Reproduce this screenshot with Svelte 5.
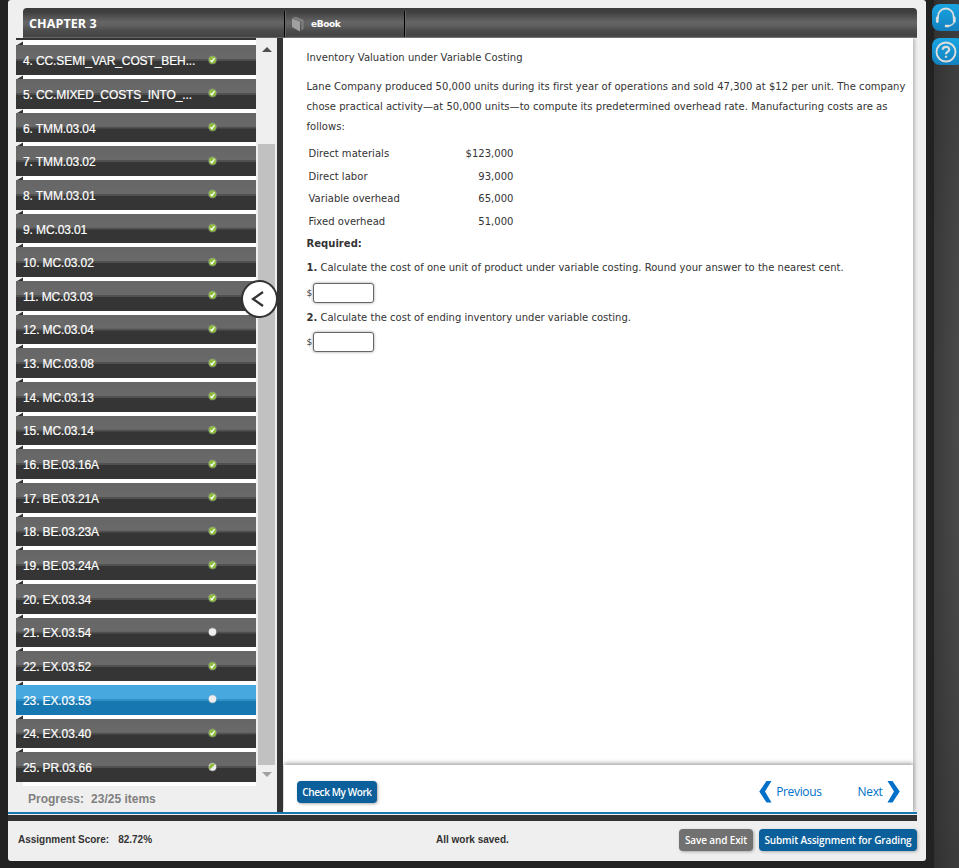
<script lang="ts">
  type Status = 'done' | 'partial' | 'empty';
  type Item = { n: number; title: string; status: Status };

  const titles = [
    'CC.SEMI_VAR_COST_BEH...',
    'CC.MIXED_COSTS_INTO_...',
    'TMM.03.04',
    'TMM.03.02',
    'TMM.03.01',
    'MC.03.01',
    'MC.03.02',
    'MC.03.03',
    'MC.03.04',
    'MC.03.08',
    'MC.03.13',
    'MC.03.14',
    'BE.03.16A',
    'BE.03.21A',
    'BE.03.23A',
    'BE.03.24A',
    'EX.03.34',
    'EX.03.54',
    'EX.03.52',
    'EX.03.53',
    'EX.03.40',
    'PR.03.66'
  ];

  const statuses: Record<number, Status> = { 21: 'empty', 23: 'empty', 25: 'partial' };

  const items: Item[] = titles.map((title, i) => ({
    n: i + 4,
    title,
    status: statuses[i + 4] ?? 'done'
  }));

  const costs = [
    ['Direct materials', '$123,000'],
    ['Direct labor', '93,000'],
    ['Variable overhead', '65,000'],
    ['Fixed overhead', '51,000']
  ];

  let selected = $state(23);
  let unitCost = $state('');
  let inventoryCost = $state('');
</script>

<div class="page">
  <div class="window">
    <header class="topbar">
      <h1>CHAPTER 3</h1>
      <button type="button" class="ebook">
        <svg width="12" height="16" viewBox="0 0 12 16" aria-hidden="true">
          <path d="M0 2.500 8 5.500V15.500L0 11Z" fill="#a0a0a0" />
          <path d="M0 2 3.500 .800 11.500 3.800V13L9.500 14.500V5.500Z" fill="#808080" />
        </svg>
        <span>eBook</span>
      </button>
    </header>

    <div class="main">
      <nav class="sidebar">
        <ul class="items">
          {#each items as item (item.n)}
            <li>
              <button
                type="button"
                class="item"
                class:active={item.n === selected}
                onclick={() => (selected = item.n)}
              >
                <span class="name">{item.n}. {item.title}</span>
                <svg class="dot" width="10" height="10" viewBox="0 0 10 10" aria-hidden="true">
                  <circle cx="5.500" cy="5" r="4.500" fill="#bbb" opacity=".35" />
                  <circle cx="5.500" cy="5" r="3.700" fill={item.status === 'done' ? '#8fbe3f' : '#ededed'} />
                  {#if item.status === 'done'}
                    <path d="M3.500 5.200 4.900 6.700 7.500 3.200" fill="none" stroke="#fff" stroke-width="1.300" />
                  {:else if item.status === 'partial'}
                    <path d="M2.900 7.600A3.700 3.700 0 0 1 8.100 2.400Z" fill="#8fbe3f" />
                  {/if}
                </svg>
              </button>
            </li>
          {/each}
        </ul>
        <p class="progress"><span>Progress:</span><span>23/25 items</span></p>
      </nav>

      <div class="scrollbar">
        <span class="arrow up"></span>
        <span class="thumb"></span>
        <span class="arrow down"></span>
      </div>

      <div class="divider">
        <button type="button" class="collapse" aria-label="Collapse">
          <svg width="13" height="16" viewBox="0 0 13 16" aria-hidden="true">
            <path d="M12 1 2 8l10 7" fill="none" stroke="#333" stroke-width="2.200" />
          </svg>
        </button>
      </div>

      <section class="content">
        <article class="question">
          <p class="title">Inventory Valuation under Variable Costing</p>
          <p class="intro">
            Lane Company produced 50,000 units during its first year of operations and sold 47,300 at $12 per unit. The company<br />
            chose practical activity—at 50,000 units—to compute its predetermined overhead rate. Manufacturing costs are as<br />
            follows:
          </p>
          <table>
            <tbody>
              {#each costs as [label, amount]}
                <tr><td>{label}</td><td class="amount">{amount}</td></tr>
              {/each}
            </tbody>
          </table>
          <p class="required"><b>Required:</b></p>
          <p class="ask"><b>1.</b> Calculate the cost of one unit of product under variable costing. Round your answer to the nearest cent.</p>
          <label class="answer"><span>$</span><input bind:value={unitCost} /></label>
          <p class="ask second"><b>2.</b> Calculate the cost of ending inventory under variable costing.</p>
          <label class="answer"><span>$</span><input bind:value={inventoryCost} /></label>
        </article>

        <div class="actions">
          <button type="button" class="btn check">Check My Work</button>
          <div class="pager">
            <a href="#prev">
              <svg width="13" height="22" viewBox="0 0 13 22" aria-hidden="true">
                <path d="M7.500 0H12.500L6 10.500 12.500 21.500H7.500L.300 10.500Z" fill="#0070c9" />
              </svg>
              <span>Previous</span>
            </a>
            <a href="#next">
              <span>Next</span>
              <svg width="13" height="22" viewBox="0 0 13 22" aria-hidden="true">
                <path d="M5.500 0H.500L7 10.500 .500 21.500H5.500L12.700 10.500Z" fill="#0070c9" />
              </svg>
            </a>
          </div>
        </div>
      </section>
    </div>

    <div class="rule"></div>

    <footer class="bottom">
      <p class="score"><span>Assignment Score:</span><span>82.72%</span></p>
      <p class="saved">All work saved.</p>
      <button type="button" class="btn exit">Save and Exit</button>
      <button type="button" class="btn submit">Submit Assignment for Grading</button>
    </footer>
  </div>

  <aside class="rail">
    <button type="button" aria-label="Support">
      <svg width="22" height="22" viewBox="0 0 22 22" fill="none" stroke="#ddd" aria-hidden="true">
        <path d="M3 11V9.500a7.800 8 0 0 1 15.600 0V11" stroke-width="1.800" />
        <path d="M2.300 11v3.500M19.300 11v3.500" stroke-width="2.800" stroke-linecap="round" />
        <path d="M19 15.500q-1.500 3-5.500 3.500" stroke-width="1.200" />
        <path d="M11 19h2.500" stroke-width="2.600" stroke-linecap="round" />
      </svg>
    </button>
    <button type="button" aria-label="Help">
      <svg width="22" height="22" viewBox="0 0 22 22" fill="none" stroke="#ddd" aria-hidden="true">
        <circle cx="11" cy="11" r="9.500" stroke-width="1.900" />
        <path d="M7.800 8.700q0-2.800 3.200-2.800t3.200 2.500q0 1.500-1.600 2.400T11 13.200" stroke-width="2.200" />
        <circle cx="11" cy="15.800" r=".8" fill="#ddd" />
      </svg>
    </button>
  </aside>
</div>

<style>
  :global(body) {
    background: #222;
  }

  .page {
    display: flex;
    height: 868px;
    overflow: hidden;
    box-sizing: border-box;
    padding-left: 8px;
    color: #333;
    font-family: 'Liberation Sans', Arial, sans-serif;
  }

  p,
  h1,
  ul {
    margin: 0;
    padding: 0;
  }

  button {
    padding: 0;
    border: 0;
    cursor: pointer;
  }

  .window {
    display: flex;
    flex-direction: column;
    width: 918px;
    height: 861px;
    flex-shrink: 0;
    background: #efefef;
    border-radius: 3px;
  }

  .topbar {
    display: flex;
    height: 30px;
    flex-shrink: 0;
    margin: 8px 9px 0 15px;
    box-sizing: border-box;
    border-bottom: 1px solid #666;
    border-radius: 4px 4px 0 0;
    background: linear-gradient(#3a3a3a, #404040 15%, #656565 48%, #606060 60%, #4c4c4c 78%, #454545 96%);
    color: #fff;
  }

  .topbar h1 {
    width: 261px;
    padding-left: 6px;
    box-sizing: border-box;
    font: bold 12.500px/31px 'Open Sans', sans-serif;
    letter-spacing: 0.1px;
  }

  .ebook {
    display: flex;
    align-items: center;
    width: 121px;
    height: 26px;
    margin-top: 3px;
    box-sizing: border-box;
    border-left: 1px solid #000;
    border-right: 1px solid #000;
    box-shadow: 1px 0 #666, inset 1px 0 #666;
    padding-left: 7px;
    gap: 7px;
    background: none;
    color: #fff;
    font: bold 9px 'DejaVu Sans', sans-serif;
    letter-spacing: -0.4px;
  }

  .main {
    display: flex;
    height: 774px;
    padding-right: 9px;
    flex-shrink: 0;
  }

  .sidebar {
    width: 240px;
    margin-left: 8px;
    flex-shrink: 0;
    border-top: 2px solid #333;
    box-sizing: border-box;
  }

  .items {
    height: 746px;
    list-style: none;
    background: linear-gradient(90deg, #efefef 7px, #fff 7px);
    padding-top: 1.400px;
    box-sizing: border-box;
  }

  .items li {
    height: 33.67px;
    padding-top: 4px;
    box-sizing: border-box;
    background: linear-gradient(150deg, transparent 3.500px, #333 4.500px) 0 0 / 7px 4px no-repeat;
  }

  .item {
    display: flex;
    align-items: center;
    width: 100%;
    height: 29.67px;
    padding: 0 39px 0 7px;
    background: linear-gradient(#666 0, #696969 46%, #505050 48%, #505050 52%, #353535 55%);
    color: #fff;
    font: 12px/30px 'Liberation Sans', Arial, sans-serif;
    letter-spacing: -0.11px;
    -webkit-text-stroke: 0.2px #fff;
  }

  .item.active {
    background: linear-gradient(#47a8e0 0, #47a8e0 46%, #3190c8 48%, #3190c8 52%, #1777b0 55%);
  }

  .name {
    flex: 1;
    text-align: left;
    white-space: nowrap;
    padding-top: 2px;
  }

  .dot {
    margin-bottom: 1px;
  }

  .progress {
    display: flex;
    gap: 7px;
    padding-left: 12px;
    color: #808080;
    font: bold 12px/27px 'Liberation Sans', Arial, sans-serif;
  }

  .scrollbar {
    display: flex;
    flex-direction: column;
    align-items: center;
    width: 21px;
    height: 748px;
    flex-shrink: 0;
  }

  .arrow {
    border: solid transparent;
    border-width: 0 5px;
  }

  .up {
    margin: 9px 0 92px;
    border-bottom: 5px solid #505050;
  }

  .thumb {
    width: 17px;
    height: 621px;
    background: #c1c1c1;
  }

  .down {
    margin-top: 7px;
    border-top: 5px solid #a0a0a0;
  }

  .divider {
    position: relative;
    width: 6px;
    flex-shrink: 0;
    background: #333;
  }

  /* round handle that straddles the divider */
  .collapse {
    position: absolute;
    top: 242px;
    left: -36px;
    display: grid;
    place-items: center;
    width: 37px;
    height: 38px;
    padding-right: 5px;
    border: 2px solid #333;
    border-radius: 50%;
    background: #fff;
  }

  .content {
    display: flex;
    flex-direction: column;
    width: 630px;
    background: #fff;
    box-shadow: 3px 0 3px -1px #bbb;
  }

  .question {
    flex: 1;
    padding: 10px 0 0 23.500px;
    font: 10px/20px Verdana, 'DejaVu Sans', sans-serif;
    letter-spacing: 0.035px;
    white-space: nowrap;
  }

  .intro {
    margin-top: 9px;
  }

  table {
    margin-top: 6px;
    border-spacing: 0;
  }

  td {
    height: 22.500px;
    padding: 0 0 0 2px;
    width: 125px;
  }

  .amount {
    width: 78px;
    text-align: right;
  }

  .required {
    margin-top: 1px;
  }

  .ask {
    margin-top: 4px;
    letter-spacing: 0.01px;
  }

  .ask.second {
    margin-top: 5px;
  }

  .answer {
    display: flex;
    align-items: center;
    height: 20px;
    margin-top: 5px;
  }

  .second + .answer {
    margin-top: 4px;
  }

  .answer span {
    width: 6px;
    font-size: 9px;
    letter-spacing: 0;
  }

  .answer input {
    width: 61px;
    height: 20px;
    padding: 0 4px;
    box-sizing: border-box;
    border: 1px solid #666;
    border-radius: 3px;
    box-shadow: 0 0 3px #999;
    font: inherit;
  }

  .actions {
    display: flex;
    justify-content: space-between;
    align-items: flex-start;
    height: 47px;
    margin-left: 1px;
    padding: 16px 13px 0;
    box-sizing: border-box;
    box-shadow: 0 -2px 4px #aaa;
    background: #fff;
  }

  .btn {
    height: 22px;
    border-radius: 4px;
    background: #0b609c;
    box-shadow: 1px 1px 3px #aaa;
    color: #fff;
    font: 600 10px/22px 'Open Sans', sans-serif;
    letter-spacing: -0.14px;
    white-space: nowrap;
  }

  .check {
    width: 80px;
    letter-spacing: -0.4px;
  }

  .pager {
    display: flex;
    gap: 36px;
  }

  .pager a {
    display: flex;
    align-items: center;
    gap: 4.500px;
    height: 21px;
    color: #0070c9;
    font: 12px/21px 'Open Sans', sans-serif;
    letter-spacing: -0.35px;
    text-decoration: none;
  }

  .rule {
    height: 6px;
    flex-shrink: 0;
    margin-right: 9px;
    border-top: 2px solid #1777b0;
    background: #333;
    box-shadow: inset 0 1px #efefef;
    padding-top: 1px;
  }

  .bottom {
    display: flex;
    align-items: center;
    height: 38px;
    padding: 0 9px 0 10px;
    font: bold 10px/12px 'Liberation Sans', Arial, sans-serif;
  }

  .score {
    display: flex;
    gap: 9px;
    width: 418px;
  }

  .saved {
    flex: 1;
  }

  .exit {
    width: 74px;
    background: #717171;
    margin-right: 6px;
  }

  .submit {
    width: 158px;
  }

  .rail {
    display: flex;
    flex-direction: column;
    gap: 7px;
    width: 25px;
    margin-left: 8px;
    padding-top: 4px;
    box-sizing: border-box;
    background: radial-gradient(ellipse 60px 700px at 45px 50%, #585858, #303030);
  }

  .rail button {
    display: flex;
    align-items: center;
    width: 32px;
    height: 27px;
    margin-left: -2px;
    padding-left: 3px;
    flex-shrink: 0;
    border-radius: 8px;
    background: linear-gradient(#19a5e2, #1380bf);
  }
</style>
